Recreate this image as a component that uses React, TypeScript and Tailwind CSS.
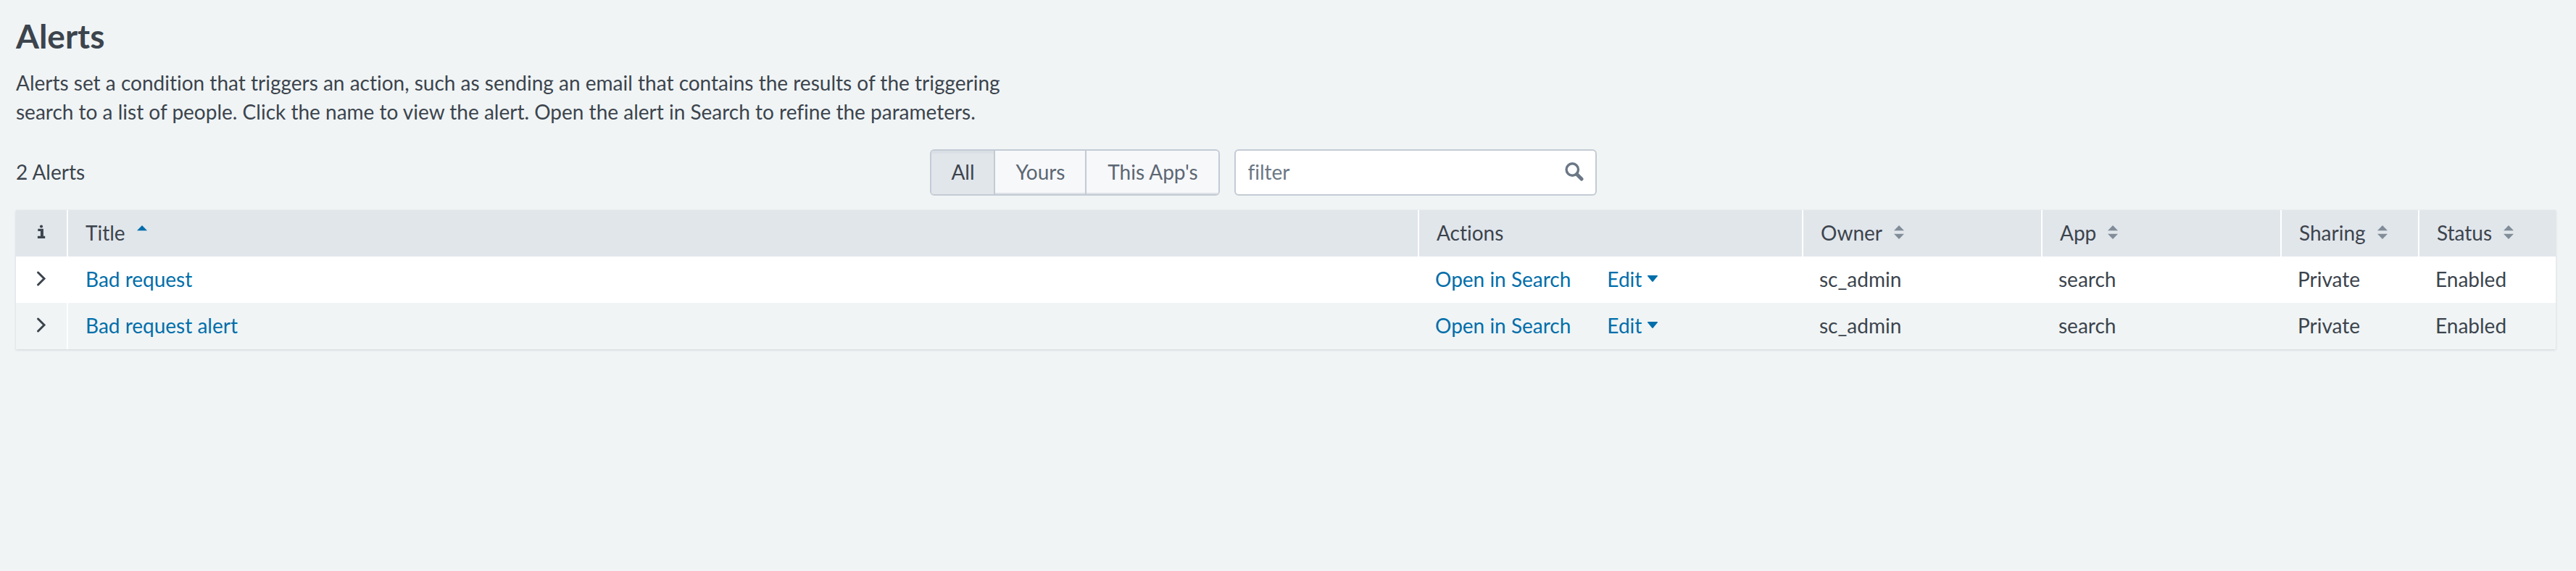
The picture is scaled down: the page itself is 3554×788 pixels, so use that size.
import { useState } from "react";
import clsx from "clsx";

type Alert = { title: string; owner: string; app: string; sharing: string; status: string };

const alerts: Alert[] = [
  { title: "Bad request", owner: "sc_admin", app: "search", sharing: "Private", status: "Enabled" },
  { title: "Bad request alert", owner: "sc_admin", app: "search", sharing: "Private", status: "Enabled" },
];

const scopes = [
  { label: "All", width: "w-[88px]" },
  { label: "Yours", width: "w-[126px]" },
  { label: "This App's", width: "w-[182px]" },
];

function InfoIcon() {
  return (
    <svg className="mx-auto h-6 w-6" viewBox="0 0 24 24" fill="currentColor" role="img" aria-label="Info">
      <circle cx="12" cy="3.5" r="2.1" />
      <path d="M7.3 6.8h7.6v10h2.3V20H6.9v-3.2h4V10H7.3z" />
    </svg>
  );
}

function ChevronIcon() {
  return (
    <svg className="h-6 w-6" viewBox="0 0 24 24" fill="none" stroke="currentColor" strokeWidth="3" aria-hidden="true">
      <path d="M7.5 3L16 11.5L7.5 20" strokeLinecap="round" />
    </svg>
  );
}

function SortIcon({ ascending }: { ascending?: boolean }) {
  return (
    <svg
      className={clsx("h-6 w-[14px]", ascending ? "text-[#006eaa]" : "text-[#818d99]")}
      viewBox="0 0 14 24"
      fill="currentColor"
      aria-hidden="true"
    >
      <path d="M7 2L14 9.3H0z" />
      {!ascending && <path d="M0 13.7h14L7 21z" />}
    </svg>
  );
}

function CaretIcon() {
  return (
    <svg className="h-6 w-[14px]" viewBox="0 0 14 24" fill="currentColor" aria-hidden="true">
      <path d="M0.6 7h12.8q.9.3.3 1.2L7.8 15.6q-.8.8-1.6 0L.3 8.2Q-.3 7.3.6 7z" />
    </svg>
  );
}

function SearchIcon() {
  return (
    <svg className="h-[26px] w-[26px]" viewBox="0 0 26 26" fill="none" stroke="currentColor" aria-hidden="true">
      <circle cx="10.3" cy="10" r="8.2" strokeWidth="3.4" />
      <path d="M16.5 16.5L23 23" strokeWidth="5" strokeLinecap="round" />
    </svg>
  );
}

function HeaderCell({ label, width, sort }: { label: string; width?: string; sort?: "none" | "asc" }) {
  return (
    <th
      scope="col"
      aria-sort={sort === "asc" ? "ascending" : undefined}
      className={clsx("border-r-2 border-white px-6 pt-[11px] pb-[13px] text-left font-normal last:border-r-0", width)}
    >
      {sort ? (
        <button type="button" className="flex h-10 items-center gap-4">
          {label}
          <SortIcon ascending={sort === "asc"} />
        </button>
      ) : (
        label
      )}
    </th>
  );
}

const cell = "px-[22px] pt-[11px] pb-[13px]";

export default function App() {
  const [scope, setScope] = useState("All");
  const [query, setQuery] = useState("");
  const rows = alerts.filter((a) => a.title.toLowerCase().includes(query.toLowerCase()));

  return (
    <main className="min-h-screen bg-[#f0f4f5] px-[22px] pt-[22px] pr-7 pb-5 font-['Lato',sans-serif] text-[28px] leading-10 text-[#3c444d] [font-variant-ligatures:none]">
      <h1 className="text-[46px] leading-[56px] font-bold">Alerts</h1>
      <p className="mt-4 max-w-[1400px]">
        Alerts set a condition that triggers an action, such as sending an email that contains the results of the
        triggering search to a list of people. Click the name to view the alert. Open the alert in Search to refine the
        parameters.
      </p>

      <div className="mt-8 flex items-center">
        <div className="w-[36%] pb-[2px]">2 Alerts</div>
        <div className="flex h-16 overflow-hidden rounded-md border-2 border-[#c3cbd4]" role="group" aria-label="Owner">
          {scopes.map(({ label, width }) => (
            <button
              key={label}
              type="button"
              aria-pressed={scope === label}
              onClick={() => setScope(label)}
              className={clsx(
                "border-r-2 border-[#c3cbd4] pb-[2px] last:border-r-0",
                width,
                scope === label
                  ? "bg-[#e1e6eb] text-[#3c444d] shadow-[inset_0_4px_0_#d9dfe5]"
                  : "bg-[#f7f8fa] text-[#5c6773] shadow-[inset_0_-2px_0_#dce1e6]",
              )}
            >
              {label}
            </button>
          ))}
        </div>
        <div className="relative ml-5">
          <input
            type="text"
            aria-label="Filter alerts"
            placeholder="filter"
            value={query}
            onChange={(e) => setQuery(e.target.value)}
            className="block h-16 w-[500px] rounded-md border-2 border-[#c3cbd4] bg-white pr-14 pb-[2px] pl-4 placeholder:text-[#6b7785]"
          />
          <span className="pointer-events-none absolute top-[18px] right-[18px] text-[#6b7785]">
            <SearchIcon />
          </span>
        </div>
      </div>

      <table className="mt-5 w-full table-fixed border-separate border-spacing-0 shadow-[0_1px_3px_rgba(60,68,77,0.18)]">
        <thead className="bg-[#e1e6eb]">
          <tr>
            <th scope="col" className="w-[72px] border-r-2 border-white pt-[11px] pb-[13px]">
              <InfoIcon />
            </th>
            <HeaderCell label="Title" sort="asc" />
            <HeaderCell label="Actions" width="w-[530px]" />
            <HeaderCell label="Owner" width="w-[330px]" sort="none" />
            <HeaderCell label="App" width="w-[330px]" sort="none" />
            <HeaderCell label="Sharing" width="w-[190px]" sort="none" />
            <HeaderCell label="Status" width="w-[188px]" sort="none" />
          </tr>
        </thead>
        <tbody>
          {rows.map((a) => (
            <tr key={a.title} className="bg-white even:bg-[#f0f4f5]">
              <td className="border-r-2 border-white pt-[11px] pb-[13px]">
                <button type="button" aria-label={`Expand ${a.title}`} className="mx-auto flex h-10 items-center">
                  <ChevronIcon />
                </button>
              </td>
              <td className="px-6 pt-[11px] pb-[13px]">
                <a href="#" className="text-[#006eaa]">
                  {a.title}
                </a>
              </td>
              <td className={cell}>
                <div className="flex items-center gap-[50px] text-[#006eaa]">
                  <a href="#">Open in Search</a>
                  <button type="button" className="flex items-center gap-2">
                    Edit
                    <CaretIcon />
                  </button>
                </div>
              </td>
              <td className={cell}>{a.owner}</td>
              <td className={cell}>{a.app}</td>
              <td className={cell}>{a.sharing}</td>
              <td className={cell}>{a.status}</td>
            </tr>
          ))}
        </tbody>
      </table>
    </main>
  );
}
